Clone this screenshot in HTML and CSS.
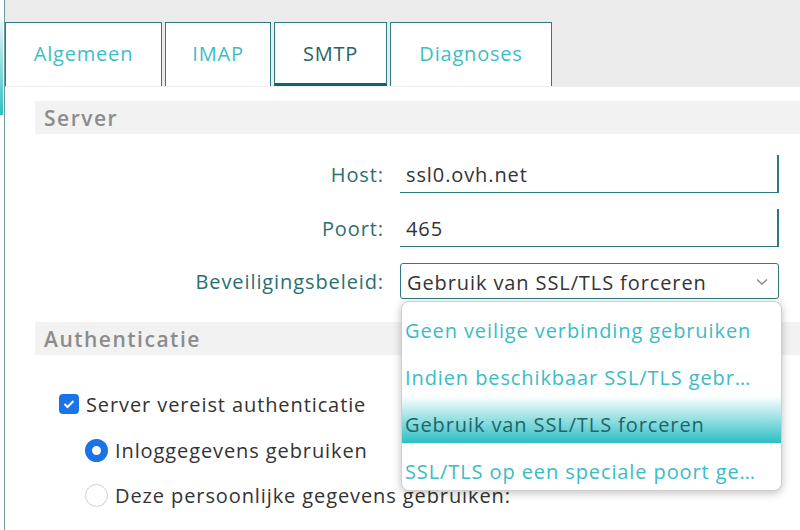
FILE: index.html
```html
<!DOCTYPE html>
<html lang="nl">
<head>
<meta charset="utf-8">
<title>SMTP</title>
<link rel="stylesheet" href="styles.css">
</head>
<body>
<div class="page">
  <div class="side"><div class="side-accent"></div></div>
  <div class="main">
    <div class="tabbar">
      <div class="tab tab-algemeen">Algemeen</div>
      <div class="tab tab-imap">IMAP</div>
      <div class="tab tab-smtp active">SMTP</div>
      <div class="tab tab-diag">Diagnoses</div>
    </div>
    <div class="panel">
      <div class="section-head">Server</div>
      <div class="form">
        <div class="row">
          <label class="label">Host:</label>
          <div class="field input">ssl0.ovh.net</div>
        </div>
        <div class="row">
          <label class="label">Poort:</label>
          <div class="field input">465</div>
        </div>
        <div class="row row-select">
          <label class="label">Beveiligingsbeleid:</label>
          <div class="field select">
            <span>Gebruik van SSL/TLS forceren</span>
            <svg class="chev" width="12" height="8" viewBox="0 0 12 8"><path d="M1 1.5 L6 6 L11 1.5" fill="none" stroke="#8a8a8a" stroke-width="1.4"/></svg>
            <ul class="menu">
              <li>Geen veilige verbinding gebruiken</li>
              <li>Indien beschikbaar SSL/TLS gebr…</li>
              <li class="selected">Gebruik van SSL/TLS forceren</li>
              <li>SSL/TLS op een speciale poort ge…</li>
            </ul>
          </div>
        </div>
      </div>
      <div class="section-head auth-head">Authenticatie</div>
      <div class="auth">
        <div class="check-row">
          <span class="checkbox"><svg width="12" height="10" viewBox="0 0 12 10"><path d="M1.5 5 L4.5 8 L10.5 2" fill="none" stroke="#fff" stroke-width="2"/></svg></span>
          <span>Server vereist authenticatie</span>
        </div>
        <div class="radio-row">
          <span class="radio on"></span>
          <span>Inloggegevens gebruiken</span>
        </div>
        <div class="radio-row">
          <span class="radio"></span>
          <span>Deze persoonlijke gegevens gebruiken:</span>
        </div>
      </div>
    </div>
  </div>
</div>
</body>
</html>
```
FILE: styles.css
```css
* { box-sizing: border-box; }
html, body { margin: 0; padding: 0; }
body {
  font-family: "Open Sans", "Noto Sans", sans-serif;
  letter-spacing: 0.9px;
  background: #fff;
  width: 800px;
  height: 530px;
  overflow: hidden;
}
.page { display: flex; height: 530px; }
.side { width: 4px; flex: none; background: #fff; }
.side-accent {
  margin-top: 20px;
  width: 3px;
  height: 95px;
  background: linear-gradient(#e8f6f7, #2cc0c5);
}
.main {
  flex: 1;
  border-left: 1px solid #6a9a9c;
  display: flex;
  flex-direction: column;
  min-width: 0;
}
.tabbar {
  background: #ebebeb;
  height: 86px;
  padding-top: 22px;
  display: flex;
  gap: 3px;
}
.tab {
  height: 64px;
  background: #fff;
  border: 1px solid #2c7a7b;
  border-bottom: none;
  color: #3cbec6;
  font-size: 20px;
  letter-spacing: 0.8px;
  display: flex;
  align-items: center;
  justify-content: center;
  padding-bottom: 2px;
}
.tab-algemeen { width: 157px; }
.tab-imap { width: 106px; }
.tab-smtp { width: 113px; }
.tab-diag { width: 162px; }
.tab.active {
  color: #1f6566;
  border-bottom: 3px solid #0f6668;
  padding-bottom: 0;
}
.panel {
  flex: 1;
  border-top: 1px solid #efefef;
  padding-top: 14px;
  position: relative;
}
.section-head {
  margin-left: 30px;
  height: 33px;
  background: #f2f2f2;
  color: #8c8c8c;
  font-size: 21px;
  font-weight: 600;
  letter-spacing: 1.5px;
  padding-left: 9px;
  display: flex;
  align-items: center;
}
.form {
  padding-top: 21px;
  display: flex;
  flex-direction: column;
  gap: 16px;
}
.row {
  display: flex;
  align-items: center;
  height: 38px;
}
.label {
  width: 395px;
  text-align: right;
  color: #2a6f70;
  font-size: 20px;
  padding-right: 16px;
}
.field {
  width: 379px;
  height: 38px;
  font-size: 20px;
  color: #333;
  display: flex;
  align-items: center;
  padding-left: 6px;
}
.input {
  border-bottom: 1px solid #2c7a7b;
  border-right: 2px solid #2c7a7b;
  padding-top: 2px;
}
.row-select { height: 36px; }
.select {
  height: 36px;
  border: 1px solid #2c7a7b;
  border-radius: 3px;
  position: relative;
  padding-top: 2px;
}
.chev { position: absolute; right: 10px; top: 14px; }
.menu {
  position: absolute;
  left: 0;
  top: 37px;
  width: 381px;
  margin: 0;
  padding: 0;
  list-style: none;
  background: #fff;
  border: 1px solid #cfcfcf;
  border-radius: 8px;
  box-shadow: 0 2px 8px rgba(0,0,0,0.25);
  overflow: hidden;
  z-index: 5;
}
.menu li {
  height: 47px;
  padding-top: 10px;
  padding-left: 3px;
  display: flex;
  align-items: center;
  color: #3abcc4;
  font-size: 20px;
  white-space: nowrap;
}
.menu li.selected {
  background: linear-gradient(#ffffff, #2bbfc4);
  color: #1d6668;
}
.auth-head { margin-top: 23px; }
.auth { padding-top: 34px; color: #333; font-size: 20px; }
.check-row {
  display: flex;
  align-items: center;
  gap: 7px;
  margin-left: 54px;
  height: 30px;
}
.checkbox {
  width: 20px;
  height: 20px;
  border-radius: 4px;
  background: #1a73e8;
  display: flex;
  align-items: center;
  justify-content: center;
}
.radio-row {
  display: flex;
  align-items: center;
  gap: 7px;
  margin-left: 80px;
  margin-top: 17px;
  height: 28px;
}
.radio {
  width: 23px;
  height: 23px;
  border-radius: 50%;
  border: 1px solid #cfcfcf;
  background: #fff;
}
.radio.on {
  border: 7px solid #1a73e8;
}
```
